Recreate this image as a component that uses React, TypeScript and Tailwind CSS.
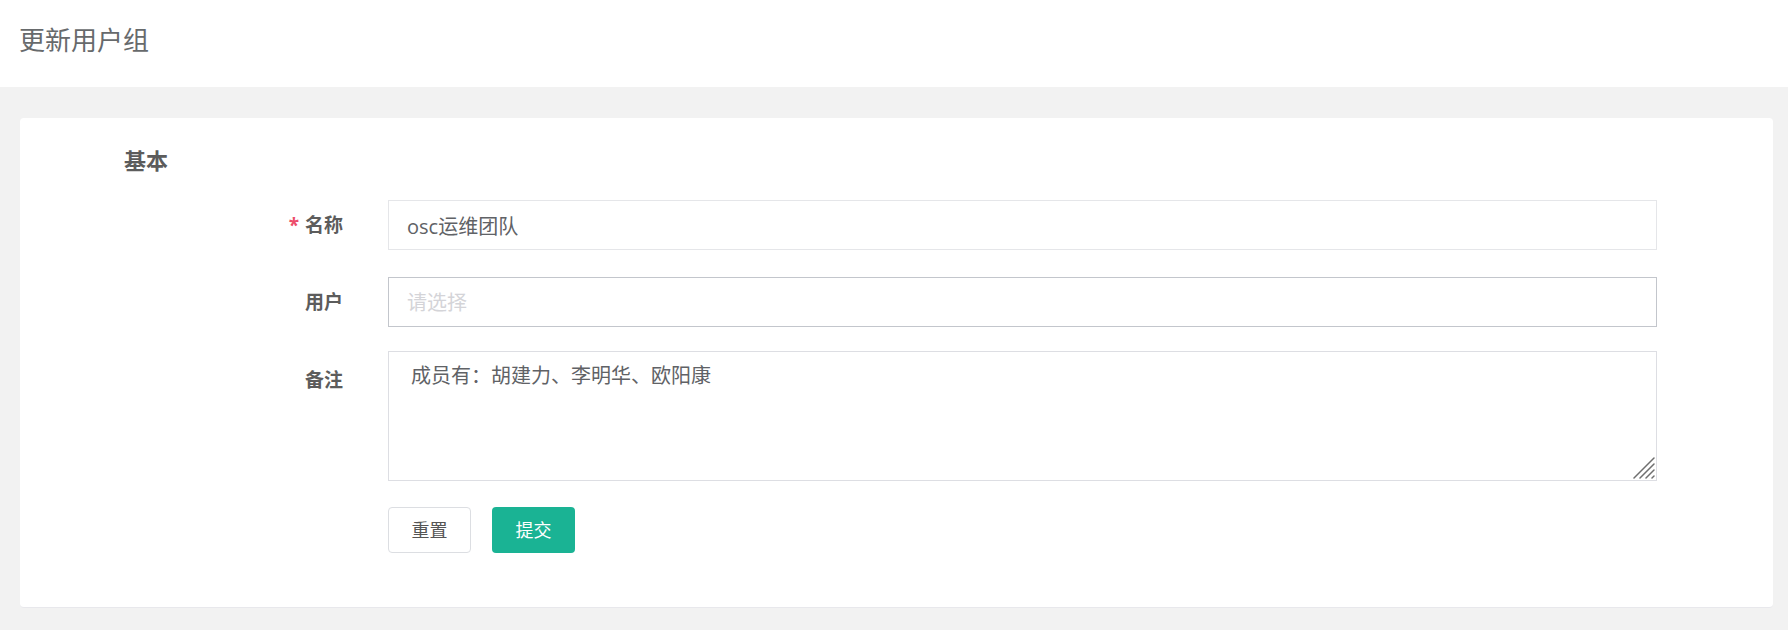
import { useState } from 'react';

const font = { fontFamily: '"Open Sans", "Noto Sans CJK SC", sans-serif' };

function FieldLabel({ text, required }: { text: string; required?: boolean }) {
  return (
    <div className="w-[323px] shrink-0 text-right text-[19px] font-bold text-[#5c5c5c]">
      {required && <span className="mr-[6px] text-[#ed4d6a]">*</span>}
      {text}
    </div>
  );
}

// grip drawn in the textarea corner
function ResizeGrip() {
  return (
    <svg
      width="22"
      height="22"
      viewBox="0 0 22 22"
      className="pointer-events-none absolute bottom-[2px] right-[2px]"
    >
      <g stroke="#6f6f6f" strokeWidth="1.5" strokeLinecap="round">
        <line x1="1" y1="21" x2="21" y2="1" />
        <line x1="7" y1="21" x2="21" y2="7" />
        <line x1="13" y1="21" x2="21" y2="13" />
        <line x1="19" y1="21" x2="21" y2="19" />
      </g>
    </svg>
  );
}

export default function App() {
  const [name, setName] = useState('osc运维团队');
  const [users, setUsers] = useState('');
  const [remark, setRemark] = useState('成员有：胡建力、李明华、欧阳康');

  const reset = () => {
    setName('');
    setUsers('');
    setRemark('');
  };

  return (
    <div className="flex min-h-[630px] flex-col bg-[#f2f2f2]" style={font}>
      <header className="flex h-[87px] items-center bg-white pb-[7px] pl-[19px]">
        <h1 className="text-[26px] font-normal leading-none text-[#676a6c]">更新用户组</h1>
      </header>

      <main className="mb-[21px] ml-[20px] mr-[15px] mt-[31px] rounded-[4px] border-b border-[#e8e8ec] bg-white pb-[54px] pt-[26px]">
        <h2 className="pl-[104px] text-[22px] font-bold leading-[33px] text-[#5c5c5c]">基本</h2>

        <div className="mt-[23px] flex items-center">
          <FieldLabel text="名称" required />
          <input
            value={name}
            onChange={(e) => setName(e.target.value)}
            className="ml-[45px] mr-[116px] h-[50px] flex-1 border border-[#e5e6e9] px-[18px] text-[20px] text-[#606266] outline-none"
          />
        </div>

        <div className="mt-[27px] flex items-center">
          <FieldLabel text="用户" />
          <input
            value={users}
            onChange={(e) => setUsers(e.target.value)}
            placeholder="请选择"
            className="ml-[45px] mr-[116px] h-[50px] flex-1 border border-[#c3c6cc] px-[18px] text-[20px] text-[#606266] outline-none placeholder:text-[#d4d4d8]"
          />
        </div>

        <div className="mt-[24px] flex items-start">
          <div className="pt-[15px]">
            <FieldLabel text="备注" />
          </div>
          <div className="relative ml-[45px] mr-[116px] flex flex-1">
            <textarea
              value={remark}
              onChange={(e) => setRemark(e.target.value)}
              className="h-[130px] flex-1 resize-none border border-[#dddee3] pl-[22px] pr-[23px] pt-[9px] text-[20px] leading-[30px] text-[#606266] outline-none"
            />
            <ResizeGrip />
          </div>
        </div>

        <div className="ml-[368px] mt-[26px] flex gap-[21px]">
          <button
            type="button"
            onClick={reset}
            className="h-[46px] w-[83px] rounded-[4px] border border-[#dcdee2] bg-white text-[18px] text-[#555]"
          >
            重置
          </button>
          <button
            type="submit"
            className="h-[46px] w-[83px] rounded-[4px] bg-[#1ab394] text-[18px] text-white"
          >
            提交
          </button>
        </div>
      </main>
    </div>
  );
}
